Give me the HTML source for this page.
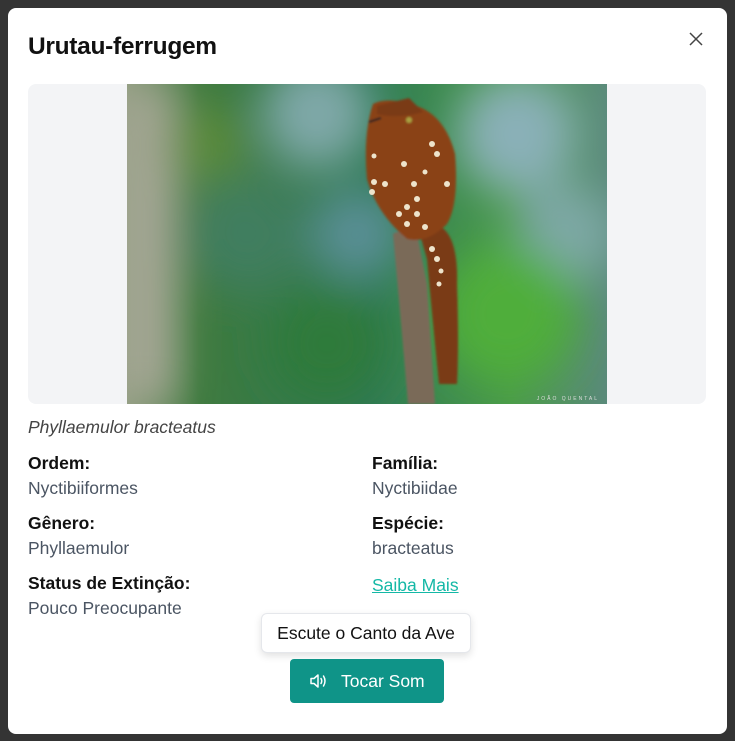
<!DOCTYPE html>
<html><head><meta charset="utf-8">
<style>
*{margin:0;padding:0;box-sizing:border-box}
html,body{width:735px;height:741px;overflow:hidden;background:#343434;font-family:"Liberation Sans",Arial,sans-serif}
.modal{position:absolute;left:8px;top:8px;width:719px;height:726px;background:#fff;border-radius:8px}
h1{position:absolute;left:20px;top:25px;font-size:24.5px;font-weight:bold;color:#111;letter-spacing:-0.3px}
.close{position:absolute;left:681px;top:24px;width:14px;height:14px}
.imgbox{position:absolute;left:20px;top:76px;width:678px;height:320px;background:#f3f4f6;border-radius:8px;overflow:hidden}
.imgbox svg{position:absolute;left:99px;top:0}
.sci{position:absolute;left:20px;top:409px;font-size:17.5px;font-style:italic;color:#444}
.lbl{position:absolute;font-size:17.5px;font-weight:bold;color:#111}
.val{position:absolute;font-size:17.5px;color:#4b5563}
a{position:absolute;font-size:17.5px;color:#14b8a6;text-decoration:underline}
.tip{position:absolute;left:253px;top:605px;width:210px;height:40px;border:1px solid #e5e7eb;border-radius:6px;background:#fff;box-shadow:0 3px 8px rgba(0,0,0,.12);font-size:17.5px;color:#111;text-align:center;line-height:38px}
.btn{position:absolute;left:282px;top:651px;width:154px;height:44px;background:#0f9488;border-radius:4px;color:#fff;font-size:17.5px;line-height:44px;padding-left:51px}
.btn svg{position:absolute;left:20px;top:14px}
</style></head><body>
<div class="modal">
<h1>Urutau-ferrugem</h1>
<svg class="close" viewBox="0 0 14 14"><path d="M1 1L13 13M13 1L1 13" stroke="#444" stroke-width="1.5"/></svg>
<div class="imgbox">
<svg width="480" height="320" viewBox="0 0 480 320">
<defs>
<filter id="b" x="-50%" y="-50%" width="200%" height="200%"><feGaussianBlur stdDeviation="22"/></filter>
<filter id="s"><feGaussianBlur stdDeviation="1"/></filter>
<linearGradient id="bg" x1="0" x2="1" y1="0" y2="0"><stop offset="0" stop-color="#8a9a7a"/><stop offset="0.15" stop-color="#3e7a3e"/><stop offset="0.5" stop-color="#2f7a55"/><stop offset="0.8" stop-color="#4a9a4a"/><stop offset="1" stop-color="#5a8a7a"/></linearGradient>
</defs>
<rect width="480" height="320" fill="url(#bg)"/>
<g filter="url(#b)">
<rect x="-10" y="0" width="55" height="320" fill="#a8a898"/>
<circle cx="190" cy="30" r="55" fill="#7fa8a8"/>
<circle cx="390" cy="50" r="60" fill="#8ab0b8"/>
<circle cx="440" cy="150" r="50" fill="#7ea8a6"/>
<circle cx="120" cy="150" r="60" fill="#3f7e5e"/>
<circle cx="380" cy="230" r="70" fill="#4fae3a"/>
<circle cx="200" cy="260" r="60" fill="#2e7a3a"/>
<circle cx="80" cy="60" r="40" fill="#5a8a3a"/>
<circle cx="230" cy="150" r="45" fill="#5a8f95"/>
</g>
<g filter="url(#s)">
<path d="M266 150 Q272 145 290 150 L300 200 Q304 260 308 320 L281 320 Q276 260 266 150Z" fill="#7a6a58"/>
<path d="M290 140 Q332 130 330 200 Q332 260 330 300 L312 300 Q305 230 300 175Z" fill="#7a3a18"/>
<path d="M246 20 Q262 12 290 22 Q318 32 328 70 Q332 120 320 140 Q300 160 280 155 Q250 130 240 95 Q236 50 246 20Z" fill="#8a4218"/>
<path d="M250 22 L282 14 L296 28 Q270 35 250 30Z" fill="#7a3a15"/>
<path d="M242 38 L254 34" stroke="#222" stroke-width="2"/>
<circle cx="282" cy="36" r="3" fill="#a8a040"/>
</g>
<g fill="#eee4cc">
<circle cx="305" cy="60" r="3"/><circle cx="310" cy="70" r="3"/><circle cx="277" cy="80" r="3"/><circle cx="298" cy="88" r="2.5"/><circle cx="247" cy="98" r="3"/><circle cx="258" cy="100" r="3"/><circle cx="287" cy="100" r="3"/><circle cx="320" cy="100" r="3"/><circle cx="245" cy="108" r="3"/><circle cx="290" cy="115" r="3"/><circle cx="280" cy="123" r="3"/><circle cx="272" cy="130" r="3"/><circle cx="290" cy="130" r="3"/><circle cx="280" cy="140" r="3"/><circle cx="298" cy="143" r="3"/><circle cx="305" cy="165" r="3"/><circle cx="310" cy="175" r="3"/><circle cx="314" cy="187" r="2.5"/><circle cx="312" cy="200" r="2.5"/><circle cx="247" cy="72" r="2.5"/>
</g>
<text x="472" y="316" font-size="5" fill="#ddd" text-anchor="end" letter-spacing="2" font-family="Liberation Sans">JOÃO QUENTAL</text>
</svg>
</div>
<div class="sci">Phyllaemulor bracteatus</div>
<div class="lbl" style="left:20px;top:445px">Ordem:</div>
<div class="val" style="left:20px;top:470px">Nyctibiiformes</div>
<div class="lbl" style="left:364px;top:445px">Família:</div>
<div class="val" style="left:364px;top:470px">Nyctibiidae</div>
<div class="lbl" style="left:20px;top:505px">Gênero:</div>
<div class="val" style="left:20px;top:530px">Phyllaemulor</div>
<div class="lbl" style="left:364px;top:505px">Espécie:</div>
<div class="val" style="left:364px;top:530px">bracteatus</div>
<div class="lbl" style="left:20px;top:565px">Status de Extinção:</div>
<div class="val" style="left:20px;top:590px">Pouco Preocupante</div>
<a style="left:364px;top:567px">Saiba Mais</a>
<div class="tip">Escute o Canto da Ave</div>
<div class="btn"><svg width="18" height="16" viewBox="0 0 18 16" fill="none" stroke="#fff" stroke-width="1.5" stroke-linejoin="round" stroke-linecap="round"><path d="M1 5.5h3l4-3.5v12l-4-3.5H1z"/><path d="M11 5.5q1.5 2.5 0 5"/><path d="M13.5 3q3 5 0 10"/></svg>Tocar Som</div>
</div>
</body></html>
